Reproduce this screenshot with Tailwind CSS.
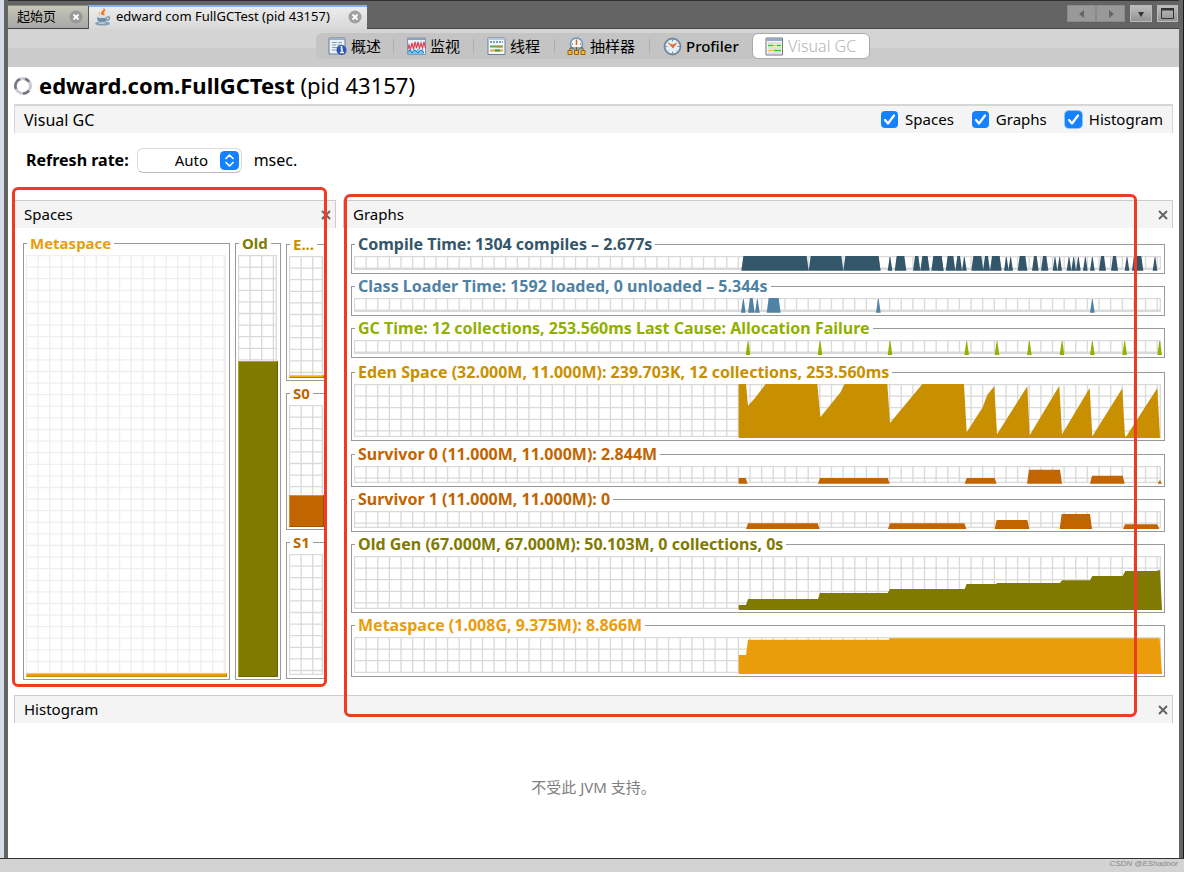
<!DOCTYPE html>
<html lang="zh-CN">
<head>
<meta charset="utf-8">
<title>VisualVM - Visual GC</title>
<script src="https://cdn.jsdelivr.net/npm/@tailwindcss/browser@4"></script>
</head>
<body class="bg-white font-['Noto_Sans','Noto_Sans_CJK_SC',sans-serif] text-[15px] text-black">
<div class="flex min-h-screen flex-col">
  <div class="flex flex-1">
    <div class="w-1 bg-[#d5dce8]"></div>
    <div class="w-1 bg-[#646464]"></div>

    <main class="flex min-w-0 flex-1 flex-col">
      <!-- editor tabs -->
      <header class="flex h-[29px] items-start justify-between border-t border-b border-t-[#2e2e2e] border-b-[#444] bg-[#646464] pt-1 text-[13px]">
        <div class="flex">
          <button type="button" class="flex h-[23px] w-20 items-center justify-between border-t border-[#8c8c80] bg-linear-to-b from-[#c6c6b8] to-[#a8a8a8] pr-[5px] pl-[9px]">起始页
            <svg class="size-[14px]" viewBox="0 0 14 14"><circle cx="7" cy="7" r="6.5" fill="#999"/><path d="M4.5 4.5l5 5m0-5l-5 5" stroke="#fff" stroke-width="1.8"/></svg>
          </button>
          <button type="button" class="flex h-[24px] w-[279px] items-center border-t-2 border-l border-t-[#86b0ee] border-l-[#555] bg-linear-to-b from-[#ececec] to-[#d8d8d8] pr-[5px] pb-[2px] pl-[5px]">
            <svg class="mr-1 size-[18px] shrink-0" viewBox="0 0 18 18"><path d="M9 0c2 2-2 3-2 5 0 2 2 2 2 4 3-2 1-3 1-4 0-2 2-2 1-4z" fill="#f47a1c"/><path d="M6 4c-2 2 0 3 1 5" stroke="#f7a35c" fill="none"/><path d="M3 8h10c0 4-1 7-5 7s-5-3-5-7z" fill="#6f8fa8"/><ellipse cx="8" cy="8.500" rx="5" ry="1.500" fill="#d5e0e8"/><path d="M13 9c4-1 3 3-.5 3.500" fill="none" stroke="#6f8fa8" stroke-width="1.300"/><ellipse cx="8.500" cy="15.500" rx="7.500" ry="2" fill="#7f9db5"/><ellipse cx="8" cy="15" rx="4" ry=".8" fill="#c7d6e0"/></svg>
            <span class="flex-1 text-left whitespace-nowrap">edward com FullGCTest (pid 43157)</span>
            <svg class="size-[14px] shrink-0" viewBox="0 0 14 14"><circle cx="7" cy="7" r="6.500" fill="#a0a0a0"/><path d="M4.500 4.500l5 5m0-5l-5 5" stroke="#fff" stroke-width="1.800"/></svg>
          </button>
        </div>
        <div class="flex items-start pr-px">
          <button type="button" aria-label="Previous" class="grid h-[17px] w-[29px] place-items-center border border-[#8a8a8a] bg-[#999]"><svg class="size-2" viewBox="0 0 8 8"><path d="M6 0v8L1 4z" fill="#666"/></svg></button>
          <button type="button" aria-label="Next" class="mr-[5px] grid h-[17px] w-[29px] place-items-center border border-[#8a8a8a] bg-[#999]"><svg class="size-2" viewBox="0 0 8 8"><path d="M2 0v8l5-4z" fill="#666"/></svg></button>
          <button type="button" aria-label="Tab list" class="mr-[5px] grid h-[17px] w-[22px] place-items-center border border-[#bbb] bg-linear-to-b from-[#bdbdbd] to-[#939393]"><svg class="size-2" viewBox="0 0 8 8"><path d="M1 2h6L4 7z" fill="#333"/></svg></button>
          <button type="button" aria-label="Maximize" class="grid h-[17px] w-[21px] place-items-center border border-[#bbb] bg-linear-to-b from-[#bdbdbd] to-[#939393]"><svg class="h-[11px] w-[13px]" viewBox="0 0 13 11"><path d="M.5 1h12v9.500H.5z" fill="none" stroke="#333"/><path d="M0 0h13v2.500H0z" fill="#333"/></svg></button>
        </div>
      </header>

      <!-- view switcher -->
      <nav class="flex h-[38px] justify-center bg-linear-to-b from-[#d4d4d4] from-50% to-[#cbcbcb] to-50% pt-1 pr-px">
        <div class="flex h-[26px] w-[554px] items-center rounded-md bg-[#c4c4c4]">
          <button type="button" class="flex h-full w-[77px] items-center gap-1 pl-3 whitespace-nowrap">
            <svg class="size-[19px] shrink-0" viewBox="0 0 19 19"><path d="M1 1h16v16H1z" fill="#e8f1f8" stroke="#6d7f93"/><path d="M1 1h16v2H1z" fill="#9bb2ca"/><path d="M4 5.500h5m1 0h4M4 8h4m1 0h5M4 10.500h6M4 13h5" stroke="#8aa0b5"/><circle cx="13.500" cy="13" r="5" fill="#2c58b4"/><path d="M12.500 12h1.500v3.500m-2 0h4" stroke="#fff" stroke-width="1.400" fill="none"/><circle cx="13.500" cy="10" r="1" fill="#fff"/></svg>概述
          </button>
          <i class="h-[14px] w-px bg-[#adadad]"></i>
          <button type="button" class="flex h-full w-[79px] items-center gap-1 pl-[13px] whitespace-nowrap">
            <svg class="size-[19px] shrink-0" viewBox="0 0 19 19"><path d="M.5 1h18v16.500H.5z" fill="#eaf1f7" stroke="#8796a8"/><path d="M1 1h17v2H1z" fill="#8ca3ba"/><path d="M1 17v-4l2-2 2 3 2-3 2 3 2-3 2 3 2-2 2 2v3z" fill="#75c3ef"/><path d="M1 12l1-4 1.500 4 1.500-6 1.500 6 1.500-7 1.500 6 1.500-6 1.500 6 1.500-5 1.500 5 1.500-6 1.500 6" fill="none" stroke="#df4353" stroke-width="1.200"/><path d="M1 15l2-2 2 3 3-3 3 3 3-3 3 3" fill="none" stroke="#3382bd"/></svg>监视
          </button>
          <i class="h-[14px] w-px bg-[#adadad]"></i>
          <button type="button" class="flex h-full w-[80px] items-center gap-1 pl-[13px] whitespace-nowrap">
            <svg class="size-[19px] shrink-0" viewBox="0 0 19 19"><path d="M1 1h17v16.500H1z" fill="#f5f8fb" stroke="#69809a"/><path d="M1 1h17v2H1z" fill="#b5c8dc"/><path d="M3 5h13" stroke="#3f84b6" stroke-width="1.500" stroke-dasharray="2 1"/><path d="M3 9.500h13" stroke="#58a83a" stroke-width="2"/><path d="M3 13.500h13" stroke="#dcac32" stroke-width="2"/><path d="M10 9.500h4" stroke="#d88a32" stroke-width="2"/><path d="M8 13.500h5" stroke="#3a9a43" stroke-width="2"/></svg>线程
          </button>
          <i class="h-[14px] w-px bg-[#adadad]"></i>
          <button type="button" class="flex h-full w-[94px] items-center gap-1 pl-3 whitespace-nowrap">
            <svg class="size-[19px] shrink-0" viewBox="0 0 19 19"><circle cx="9.500" cy="7" r="6" fill="#f2f8fc" stroke="#7194b5" stroke-width="1.500"/><path d="M9.500 3v5M9.500 2.500v1M5 7h1m7 0h1" stroke="#d5682b" stroke-width="1.500"/><path d="M3 13v-2h13v2M9.500 10v4" stroke="#6b5a28" fill="none"/><path d="M1 13.500h4v4H1zm6.500 0h4v4h-4zm6.500 0h4v4h-4z" fill="#f5b934" stroke="#986213"/></svg>抽样器
          </button>
          <i class="h-[14px] w-px bg-[#adadad]"></i>
          <button type="button" class="flex h-full w-[102px] items-center gap-1 pl-[13px] font-medium whitespace-nowrap">
            <svg class="size-[19px] shrink-0" viewBox="0 0 19 19"><circle cx="9.500" cy="9.500" r="8" fill="#e5f1f9" stroke="#778797" stroke-width="1.800"/><path d="M9.500 2.500v2m0 10v2m-7-7h2m10 0h2M4.500 4.500l1 1m8 8l1 1m-10 0l1-1" stroke="#6794b8"/><path d="M4.500 5.500l5 2 5-2-4.500 6z" fill="#e66d2b"/></svg>Profiler
          </button>
          <button type="button" class="flex h-full flex-1 items-center gap-1 rounded-md border border-[#aaa] bg-white pl-3 text-[16px] font-light whitespace-nowrap text-[#b5b5b5]">
            <svg class="size-[19px] shrink-0" viewBox="0 0 19 19"><path d="M1 1h16.500v17H1z" fill="#f5f5f5" stroke="#777"/><path d="M1 1h16v3H1z" fill="#96a9c7"/><path d="M3 8.500h5m4 0h4" stroke="#20cf20" stroke-width="1.500"/><path d="M8 8.500h4M3 13.500h6" stroke="#f4c23b" stroke-width="1.500"/><path d="M9 13.500h7" stroke="#20cf20" stroke-width="1.500"/><path d="M3 6h13M3 11h13M3 16h13" stroke="#ccc"/></svg>Visual GC
          </button>
        </div>
      </nav>

      <div class="flex flex-1 flex-col pr-[6px] pl-[6px]">
        <h1 class="flex h-[37px] items-center text-[22px]">
          <svg class="mr-[7px] size-[18px]" viewBox="0 0 18 18"><circle cx="9" cy="9" r="7.500" fill="none" stroke="#c9cbd2" stroke-width="3"/><path d="M2 12a7.500 7.500 0 0 1 4-10M9 16.500a7.500 7.500 0 0 0 6-3M11 1.800a7.500 7.500 0 0 1 4 3" fill="none" stroke="#73757f" stroke-width="2.500"/></svg>
          <span class="whitespace-nowrap"><b>edward.com.FullGCTest</b> (pid 43157)</span>
        </h1>

        <div class="flex h-[29px] items-center justify-between border border-t-2 border-b-0 border-[#d6d6d6] bg-[#f4f4f4] pr-[9px] pl-[9px]">
          <h2 class="text-[16px]">Visual GC</h2>
          <div class="flex gap-[18px]">
            <label class="flex items-center gap-[7px]"><span class="grid"><input type="checkbox" checked class="col-start-1 row-start-1 size-[17px] appearance-none rounded-[4px] bg-[#1482ff]"><svg class="pointer-events-none col-start-1 row-start-1 size-[17px]" viewBox="0 0 17 17"><path d="M4 9l3 3.500L13 4.500" fill="none" stroke="#fff" stroke-width="2.200" stroke-linecap="round" stroke-linejoin="round"/></svg></span>Spaces</label>
            <label class="flex items-center gap-[7px]"><span class="grid"><input type="checkbox" checked class="col-start-1 row-start-1 size-[17px] appearance-none rounded-[4px] bg-[#1482ff]"><svg class="pointer-events-none col-start-1 row-start-1 size-[17px]" viewBox="0 0 17 17"><path d="M4 9l3 3.500L13 4.500" fill="none" stroke="#fff" stroke-width="2.200" stroke-linecap="round" stroke-linejoin="round"/></svg></span>Graphs</label>
            <label class="flex items-center gap-[7px]"><span class="grid"><input type="checkbox" checked class="col-start-1 row-start-1 size-[17px] appearance-none rounded-[4px] bg-[#1482ff] ring-1 ring-[#8fc3fb]"><svg class="pointer-events-none col-start-1 row-start-1 size-[17px]" viewBox="0 0 17 17"><path d="M4 9l3 3.500L13 4.500" fill="none" stroke="#fff" stroke-width="2.200" stroke-linecap="round" stroke-linejoin="round"/></svg></span>Histogram</label>
          </div>
        </div>

        <div class="flex h-[54px] items-center pl-3">
          <label for="rate" class="mr-2 text-[16px] font-bold">Refresh rate:</label>
          <span class="mr-3 grid items-center">
            <select id="rate" class="col-start-1 row-start-1 h-[25px] w-[105px] appearance-none rounded-md border border-[#dcdcdc] border-b-[#bbb] bg-white pl-[37px]"><option>Auto</option></select>
            <svg class="pointer-events-none col-start-1 row-start-1 mr-[3px] size-[19px] justify-self-end" viewBox="0 0 19 19"><rect width="19" height="19" rx="4.500" fill="#1482ff"/><path d="M6 7.500L9.500 4 13 7.500M6 11.500L9.500 15l3.500-3.500" fill="none" stroke="#fff" stroke-width="1.700" stroke-linecap="round" stroke-linejoin="round"/></svg>
          </span>
          <span class="text-[16px]">msec.</span>
        </div>

        <div class="mt-[13px] grid grid-cols-[322fr_830fr] gap-[7px]">
          <!-- Spaces -->
          <section class="relative">
            <div class="flex h-7 items-center justify-between border border-b-0 border-[#ccc] bg-[#f4f4f4] pr-[4px] pl-[9px]">
              <h2>Spaces</h2>
              <button type="button" aria-label="Close Spaces"><svg class="size-[10px]" viewBox="0 0 10 10"><path d="M1 1l8 8m0-8L1 9" stroke="#666" stroke-width="2"/></svg></button>
            </div>
            <div class="grid grid-cols-[1fr_46px_38px] gap-[5px] pt-[7px] pr-3 pb-[15px] pl-[9px]">
              <fieldset class="min-w-0 border border-[#999] px-[2px] pt-[3px] pb-[2px]">
                <legend class="ml-px px-[3px] leading-[17px] font-bold text-[#eb9c0a]">Metaspace</legend>
                <svg data-chart="meta-space" class="block h-[422px] w-full" viewBox="0 0 603 1266" preserveAspectRatio="none"></svg>
              </fieldset>
              <fieldset class="min-w-0 border border-[#999] px-[2px] pt-[3px] pb-[2px]">
                <legend class="ml-px px-[3px] leading-[17px] font-bold text-[#807a02]">Old</legend>
                <svg data-chart="old-space" class="block h-[422px] w-full" viewBox="0 0 120 1266" preserveAspectRatio="none"></svg>
              </fieldset>
              <div class="mt-px flex flex-col gap-1">
                <fieldset class="min-w-0 border border-r-0 border-[#999] pt-[3px] pb-[2px] pl-[2px]">
                  <legend class="ml-px px-[3px] leading-[17px] font-bold text-[#c89000]">E...</legend>
                  <svg data-chart="eden-space" class="block h-[122px] w-full" viewBox="0 0 105 366" preserveAspectRatio="none"></svg>
                </fieldset>
                <fieldset class="min-w-0 border border-r-0 border-[#999] pt-[3px] pb-[2px] pl-[2px]">
                  <legend class="ml-px px-[3px] leading-[17px] font-bold text-[#c26400]">S0</legend>
                  <svg data-chart="s0-space" class="block h-[122px] w-full" viewBox="0 0 105 366" preserveAspectRatio="none"></svg>
                </fieldset>
                <fieldset class="min-w-0 border border-r-0 border-[#999] pt-[3px] pb-[2px] pl-[2px]">
                  <legend class="ml-px px-[3px] leading-[17px] font-bold text-[#c26400]">S1</legend>
                  <svg data-chart="s1-space" class="block h-[122px] w-full" viewBox="0 0 105 366" preserveAspectRatio="none"></svg>
                </fieldset>
              </div>
            </div>
            <div class="pointer-events-none absolute -top-[13px] right-[9px] bottom-2 -left-[2px] rounded-md border-3 border-[#ee3c24]"></div>
          </section>

          <!-- Graphs -->
          <section class="relative">
            <div class="flex h-7 items-center justify-between border border-b-0 border-[#ccc] bg-[#f4f4f4] pr-[4px] pl-[9px]">
              <h2>Graphs</h2>
              <button type="button" aria-label="Close Graphs"><svg class="size-[10px]" viewBox="0 0 10 10"><path d="M1 1l8 8m0-8L1 9" stroke="#666" stroke-width="2"/></svg></button>
            </div>
            <div class="flex flex-col gap-1 pt-2 pr-2 pl-2 text-[16px]">
              <fieldset class="min-w-0 border border-[#999] px-[2px] pt-[3px] pb-[2px]">
                <legend class="ml-px px-[3px] leading-[17px] font-bold whitespace-nowrap text-[#34566a]">Compile Time: 1304 compiles – 2.677s</legend>
                <svg data-chart="compile" class="block h-[15px] w-full" viewBox="0 0 2424 45" preserveAspectRatio="none"></svg>
              </fieldset>
              <fieldset class="min-w-0 border border-[#999] px-[2px] pt-[3px] pb-[2px]">
                <legend class="ml-px px-[3px] leading-[17px] font-bold whitespace-nowrap text-[#4f82a3]">Class Loader Time: 1592 loaded, 0 unloaded – 5.344s</legend>
                <svg data-chart="loader" class="block h-[15px] w-full" viewBox="0 0 2424 45" preserveAspectRatio="none"></svg>
              </fieldset>
              <fieldset class="min-w-0 border border-[#999] px-[2px] pt-[3px] pb-[2px]">
                <legend class="ml-px px-[3px] leading-[17px] font-bold whitespace-nowrap text-[#92b000]">GC Time: 12 collections, 253.560ms Last Cause: Allocation Failure</legend>
                <svg data-chart="gc" class="block h-[15px] w-full" viewBox="0 0 2424 45" preserveAspectRatio="none"></svg>
              </fieldset>
              <fieldset class="mt-[2px] min-w-0 border border-[#999] px-[2px] pt-[3px] pb-[2px]">
                <legend class="ml-px px-[3px] leading-[17px] font-bold whitespace-nowrap text-[#c89000]">Eden Space (32.000M, 11.000M): 239.703K, 12 collections, 253.560ms</legend>
                <svg data-chart="eden" class="block h-[54px] w-full" viewBox="0 0 2424 162" preserveAspectRatio="none"></svg>
              </fieldset>
              <fieldset class="mt-px min-w-0 border border-[#999] px-[2px] pt-[3px] pb-[2px]">
                <legend class="ml-px px-[3px] leading-[17px] font-bold whitespace-nowrap text-[#c26400]">Survivor 0 (11.000M, 11.000M): 2.844M</legend>
                <svg data-chart="s0" class="block h-[18px] w-full" viewBox="0 0 2424 54" preserveAspectRatio="none"></svg>
              </fieldset>
              <fieldset class="min-w-0 border border-[#999] px-[2px] pt-[3px] pb-[2px]">
                <legend class="ml-px px-[3px] leading-[17px] font-bold whitespace-nowrap text-[#c26400]">Survivor 1 (11.000M, 11.000M): 0</legend>
                <svg data-chart="s1" class="block h-[18px] w-full" viewBox="0 0 2424 54" preserveAspectRatio="none"></svg>
              </fieldset>
              <fieldset class="min-w-0 border border-[#999] px-[2px] pt-[3px] pb-[2px]">
                <legend class="ml-px px-[3px] leading-[17px] font-bold whitespace-nowrap text-[#807a02]">Old Gen (67.000M, 67.000M): 50.103M, 0 collections, 0s</legend>
                <svg data-chart="old" class="block h-[54px] w-full" viewBox="0 0 2424 162" preserveAspectRatio="none"></svg>
              </fieldset>
              <fieldset class="min-w-0 border border-[#999] px-[2px] pt-[3px] pb-[2px]">
                <legend class="ml-px px-[3px] leading-[17px] font-bold whitespace-nowrap text-[#eb9c0a]">Metaspace (1.008G, 9.375M): 8.866M</legend>
                <svg data-chart="meta" class="block h-[37px] w-full" viewBox="0 0 2424 111" preserveAspectRatio="none"></svg>
              </fieldset>
            </div>
            <div class="pointer-events-none absolute -top-[6px] right-[36px] -bottom-[22px] left-px rounded-md border-3 border-[#ee3c24]"></div>
          </section>
        </div>

        <!-- Histogram -->
        <section class="flex flex-1 flex-col">
          <div class="flex h-7 items-center justify-between border border-b-0 border-[#ccc] bg-[#f4f4f4] pr-[4px] pl-[9px]">
            <h2>Histogram</h2>
            <button type="button" aria-label="Close Histogram"><svg class="size-[10px]" viewBox="0 0 10 10"><path d="M1 1l8 8m0-8L1 9" stroke="#666" stroke-width="2"/></svg></button>
          </div>
          <p class="grid flex-1 place-items-center pb-[6px] text-[#808080]">不受此 JVM 支持。</p>
        </section>
      </div>
    </main>

    <div class="w-1 bg-[#646464]"></div>
    <div class="w-px bg-[#1a1a1a]"></div>
  </div>
  <footer class="flex h-[14px] items-start justify-end border-t border-[#333] bg-[#d3d3d3] pr-[6px] font-['Liberation_Sans',sans-serif] text-[8px] leading-[9px] text-[#888] italic">CSDN @EShadoor</footer>
</div>

<script>
// Chart units are thirds of a pixel; each shape is [left, right, top, slope].
const peak = (x, y = 3) => [x - 7, x + 7, y, 6];
const L = 1098, R = 1758;
const block = (off, list) => list.map(s => typeof s === 'number' ? peak(off + s) : [off + s[0], off + s[1], s[2] || 0, 6]);
const line = (off, pts) => pts.map(([x, y]) => [off + x, y]);

const charts = {
  compile: { color: '#34566a', base: 44, shapes: [
    ...block(L, [[64,266],[266,370],[370,482],510,[524,559],[579,601],[601,629],[634,671]]),
    ...block(R, [[-3,10],[17,46],[46,66],73,[94,130],[129,150],[150,185],199,212,[233,262],[276,296],[303,325],345,359,387,401,415,436,457,[477,498],[513,534],561,[576,610],645])] },
  loader: { color: '#4f82a3', base: 44, shapes: [...block(L, [70,[84,104],112,[140,182],475]), ...block(R, [457])] },
  gc: { color: '#92b000', base: 45, shapes: [...block(L, [84,300,510]), ...block(R, [80,171,268,366,457,554,659])] },
  eden: { color: '#c89000', path: [
    ...line(L, [[56,162],[56,0],[78,0],[84,65],[105,42],[137,0],[292,0],[301,100],[362,24],[374,0],[502,0],[510,117],[607,0]]),
    ...line(R, [[72,0],[80,145],[128,70],[142,32],[163,7],[171,151],[232,54],[262,7],[269,154],[358,5],[366,151],[449,12],[457,157],[547,13],[555,158],[559,157],[652,12],[660,159],[663,162]])] },
  s0: { color: '#c26400', base: 53, shapes: block(L, [[294,509,36],[734,830,36],[921,1026,11],[1110,1214,29],[1313,1326,43]]), path: line(L, [[56,53],[56,36],[77,36],[83,53]]) },
  s1: { color: '#c26400', base: 54, shapes: block(L, [[78,299,37],[504,739,37],[824,928,27],[1019,1116,9],[1209,1318,40]]) },
  old: { color: '#807a02', path: line(L, [[56,162],[56,147],[78,147],[84,129],[294,129],[300,111],[503,111],[510,99],[734,99],[740,84],[828,84],[832,81],[1020,81],[1026,73],[1110,73],[1117,60],[1208,60],[1216,45],[1312,45],[1318,41],[1320,44],[1326,162]]) },
  meta: { color: '#eb9c0a', path: line(L, [[56,111],[56,54],[78,54],[84,8],[506,8],[510,4],[1319,4],[1326,111]]) },
  'meta-space': { grid: '#efefef', bar: 12, color: '#eb9c0a', light: '#ffd21a', dark: '#b87a08' },
  'old-space': { bar: 948, color: '#807a02', light: '#a8a41c', dark: '#5c5802' },
  'eden-space': { bar: 8, color: '#e0a400', light: '#ffd21a', dark: '#8f6800' },
  's0-space': { bar: 96, color: '#c26400', light: '#f08a1c', dark: '#8a4800' },
  's1-space': {},
};

for (const svg of document.querySelectorAll('[data-chart]')) {
  const c = charts[svg.dataset.chart];
  const { width: w, height: h } = svg.viewBox.baseVal;
  const g = c.grid || '#dadada';
  let out = `<path fill="none" stroke="${g}" stroke-width="4" d="`;
  for (let x = 1.5; x < w; x += 34.9) out += `M${x} 0V${h - 3}`;
  out += `M${w - 5} 0V${h - 3}`;
  for (let y = 1.5; y < h - 6; y += 34.8) out += `M0 ${y}H${w - 4}`;
  out += `M0 ${h - 5}H${w - 4}"/>`;
  if (c.bar) {
    const y = h - c.bar;
    out += `<rect x="0" y="${y}" width="${w}" height="${c.bar}" fill="${c.color}"/>`
      + `<path d="M0 ${y + 1.5}H${w}M1.5 ${y}V${h}" stroke="${c.light}" stroke-width="3"/>`
      + `<path d="M${w - 1.5} ${y}V${h}M0 ${h - 1}H${w}" stroke="${c.dark}" stroke-width="2"/>`;
  }
  for (const [l, r, t, s] of c.shapes || [])
    out += `<polygon fill="${c.color}" points="${l},${c.base} ${l + s},${t} ${r - s},${t} ${r},${c.base}"/>`;
  if (c.path) out += `<polygon fill="${c.color}" points="${c.path.join(' ')}"/>`;
  svg.innerHTML = out;
}
</script>
</body>
</html>
